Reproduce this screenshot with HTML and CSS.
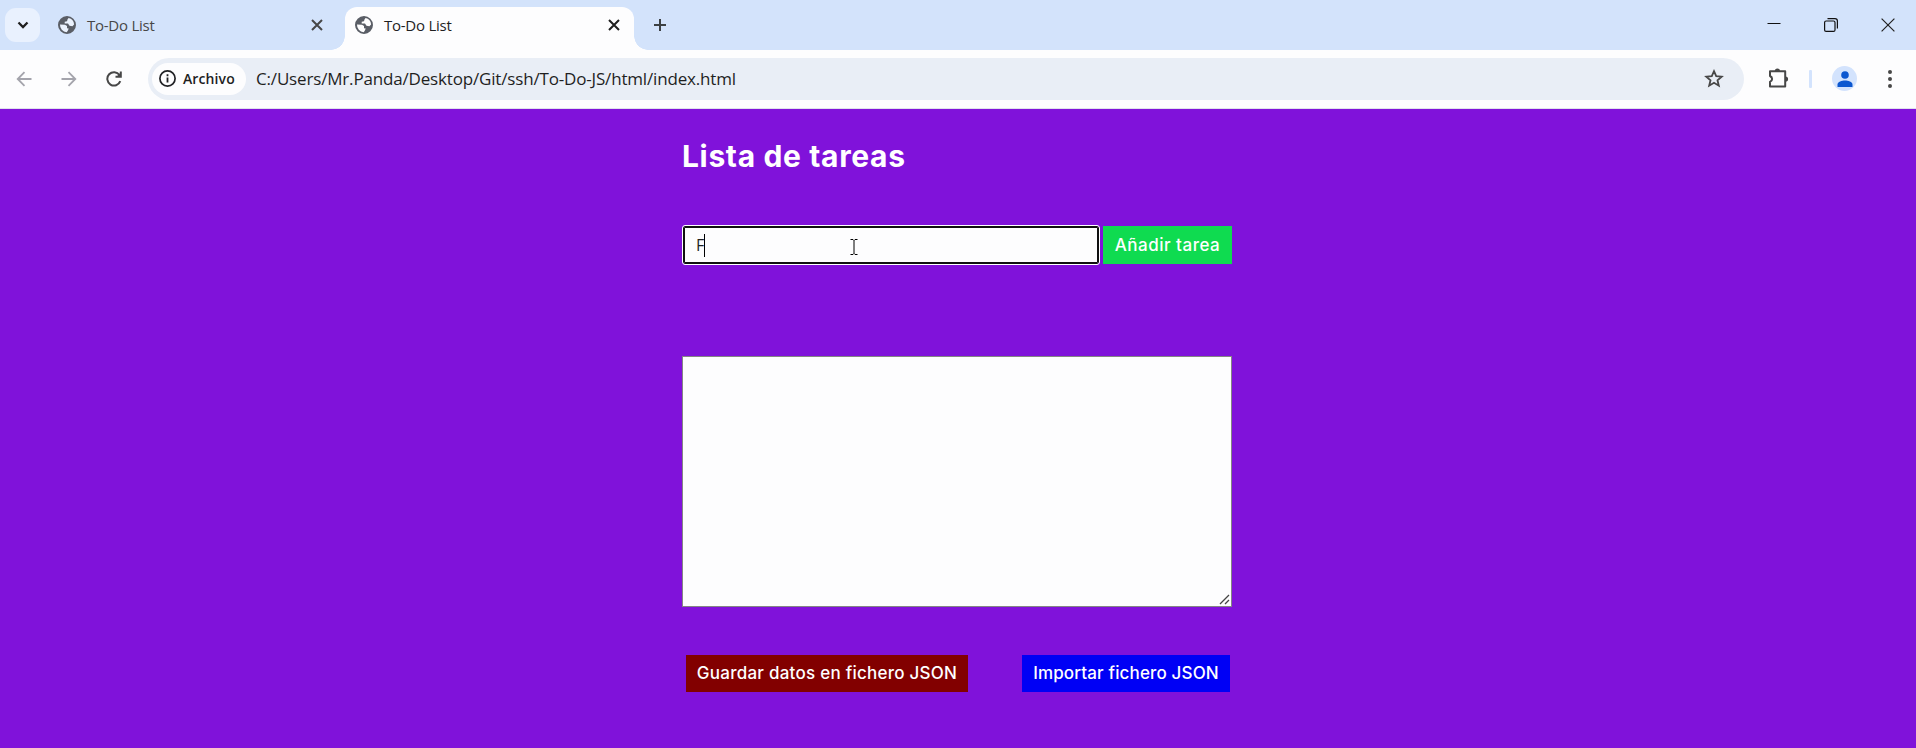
FILE: index.html
```html
<!DOCTYPE html>
<html lang="es">
<head>
<meta charset="utf-8">
<title>To-Do List</title>
<link rel="stylesheet" href="styles.css">
</head>
<body>
<svg class="defs" width="0" height="0" aria-hidden="true">
  <symbol id="globe" viewBox="0 0 18 18">
    <circle cx="9" cy="9" r="8.2" fill="#fff" fill-opacity=".55"/>
    <path fill="#5a5e66" fill-rule="evenodd" d="M9 0a9 9 0 1 0 0 18A9 9 0 0 0 9 0ZM2 8.6l5 .2 2 1.1v2.4l1.7.3-.8 2-1.2 1.6A7.2 7.2 0 0 1 2 8.6ZM10.600 1.900A7.200 7.200 0 0 1 16.100 8.400l-1.700 1.900-2.900-.5-1.500-2.200H6.700V5.700l2.300-.4.600-2Z"/>
  </symbol>
  <symbol id="cross" viewBox="0 0 12 12"><path d="M1 1l10 10M11 1L1 11" fill="none" stroke="currentColor" stroke-width="2"/></symbol>
</svg>

<header class="tabstrip">
  <button class="tab-search" aria-label="Buscar pestañas"><svg width="12" height="8" viewBox="0 0 12 8"><path d="M1.500 1.500L6 6l4.500-4.500" fill="none" stroke="currentColor" stroke-width="2.300"/></svg></button>
  <div class="tab">
    <svg class="globe"><use href="#globe"/></svg><span class="tab-title">To-Do List</span><svg class="cross"><use href="#cross"/></svg>
  </div>
  <div class="tab tab-active">
    <svg class="globe"><use href="#globe"/></svg><span class="tab-title">To-Do List</span><svg class="cross"><use href="#cross"/></svg>
  </div>
  <svg class="plus" width="14" height="14" viewBox="0 0 14 14"><path d="M7 1v12M1 7h12" stroke="#3c4043" stroke-width="2"/></svg>
  <div class="window-controls">
    <svg width="14" height="14" viewBox="0 0 14 14"><path d="M.5 5.500h13" stroke="#111" stroke-width="1"/></svg>
    <svg width="14" height="14" viewBox="0 0 14 14"><rect x=".6" y="3" width="10.400" height="10.400" rx="1.500" fill="none" stroke="#111" stroke-width="1.200"/><path d="M3.500 .6H11A2.400 2.400 0 0 1 13.400 3v7.500" fill="none" stroke="#111" stroke-width="1.200"/></svg>
    <svg width="14" height="14" viewBox="0 0 14 14"><path d="M.6 .6l12.800 12.800M13.400 .6L.6 13.400" stroke="#222" stroke-width="1.200"/></svg>
  </div>
</header>

<nav class="toolbar">
  <svg class="nav-icon muted" viewBox="0 0 16 16"><path d="M15.500 8H2M8.500 1.200L1.700 8l6.800 6.800"/></svg>
  <svg class="nav-icon muted" viewBox="0 0 16 16"><path d="M.5 8H14M7.500 1.200L14.300 8l-6.800 6.800"/></svg>
  <svg class="nav-icon" viewBox="0 0 16 16"><path d="M14.300 10.200A6.700 6.700 0 1 1 13.500 4M14.800 .5v5.300H9.500"/><path d="M14.800 1.500v4.300h-4.300z" fill="currentColor" stroke="none"/></svg>
  <div class="omnibox">
    <span class="chip">
      <svg width="17" height="17" viewBox="0 0 17 17"><circle cx="8.500" cy="8.500" r="7.600" fill="none" stroke="#202124" stroke-width="1.700"/><path d="M8.500 7.600v5M8.500 4.200v2" stroke="#202124" stroke-width="1.800"/></svg>
      <b class="chip-label">Archivo</b>
    </span>
    <span class="url">C:/Users/Mr.Panda/Desktop/Git/ssh/To-Do-JS/html/index.html</span>
    <svg class="star" width="20" height="19" viewBox="0 0 20 19"><path d="M10 2.200l2.200 5 5.500.5-4.200 3.600 1.300 5.400L10 13.800l-4.800 2.900 1.300-5.400-4.200-3.600 5.500-.5z" fill="none" stroke="#474747" stroke-width="1.800"/></svg>
  </div>
  <div class="actions">
    <svg width="21" height="21" viewBox="0 0 21 21"><path d="M2 3.200h15.200v15.300H2v-4.700c2.800-1.400 2.800-4.400 0-5.800z" fill="none" stroke="#474747" stroke-width="2" stroke-linejoin="round"/><path d="M6.800 3a2.600 2.600 0 0 1 5.200 0zM17.500 8.400a2.600 2.600 0 0 1 0 5.200z" fill="#474747"/></svg>
    <span class="divider"></span>
    <span class="avatar"><svg width="16" height="16" viewBox="0 0 16 16"><circle cx="8" cy="4" r="3.800" fill="#0b57d0"/><path d="M.5 16v-2.500C.5 10.800 5 9.500 8 9.500s7.500 1.300 7.500 4V16z" fill="#0b57d0"/></svg></span>
    <svg width="4" height="18" viewBox="0 0 4 18" fill="#474747"><circle cx="2" cy="2" r="2"/><circle cx="2" cy="9" r="2"/><circle cx="2" cy="16" r="2"/></svg>
  </div>
</nav>

<main class="page">
  <section class="todo">
    <h1 class="title">Lista de tareas</h1>
    <div class="entry">
      <div class="field"><span class="typed">F</span><span class="caret"></span>
        <svg class="pointer" width="8" height="16" viewBox="0 0 8 16"><path d="M.5 .5h2.500l1 1 1-1h2.500M4 1.500v13M.5 15.500h2.500l1-1 1 1h2.500" fill="none" stroke="#000"/></svg>
      </div>
      <button class="btn btn-add">Añadir tarea</button>
    </div>
    <div class="tasks">
      <svg class="grip" width="11" height="11" viewBox="0 0 11 11"><path d="M1 10L10 1M6 10l4-4" stroke="#444" stroke-width="1.300"/></svg>
    </div>
    <div class="files">
      <button class="btn btn-save">Guardar datos en fichero JSON</button>
      <button class="btn btn-import">Importar fichero JSON</button>
    </div>
  </section>
</main>
</body>
</html>
```
FILE: styles.css
```css
* { box-sizing: border-box; }
html, body { height: 100%; }
body {
  margin: 0;
  display: flex;
  flex-direction: column;
  overflow: hidden;
  font-family: "Open Sans", "Noto Sans", sans-serif;
  color: #1f1f1f;
}
svg { flex: none; display: block; }
.defs { position: absolute; }
button { border: 0; padding: 0; font: inherit; }

/* Tab strip */
.tabstrip {
  flex: none;
  height: 50px;
  display: flex;
  align-items: flex-end;
  background: #d3e3fb;
  padding-left: 5px;
}
.tab-search {
  width: 35px;
  height: 34px;
  margin-bottom: 8px;
  border-radius: 11px;
  background: #e9f1fe;
  color: #1f1f1f;
  display: grid;
  place-items: center;
}
.tab {
  height: 43px;
  width: 289px;
  margin-left: 8px;
  padding: 0 14px 7px 10px;
  display: flex;
  align-items: center;
  color: #474747;
}
.tab:not(.tab-active) { width: 297px; padding-right: 22px; }
.tab-active {
  position: relative;
  margin-left: 0;
  background: #fdfdfe;
  border-radius: 12px 12px 0 0;
  color: #1f1f1f;
}
.tab-active::before, .tab-active::after {
  content: "";
  position: absolute;
  bottom: 0;
  width: 14px;
  height: 14px;
}
.tab-active::before { right: 100%; background: radial-gradient(circle at 0 0, transparent 13.500px, #fdfdfe 14px); }
.tab-active::after { left: 100%; background: radial-gradient(circle at 100% 0, transparent 13.500px, #fdfdfe 14px); }
.globe { width: 18px; height: 18px; }
.cross { width: 12px; height: 12px; margin-left: auto; }
.tab-title { margin-left: 11px; font-size: 15px; letter-spacing: -.25px; }
.plus { margin: 0 0 18px 19px; }
.window-controls { margin: 0 21px 18px auto; display: flex; gap: 43px; }

/* Toolbar */
.toolbar {
  flex: none;
  height: 59px;
  padding: 0 24px 1px 16px;
  display: flex;
  align-items: center;
  background: #fdfdfe;
  border-bottom: 1px solid #dfe1ec;
}
.nav-icon {
  width: 16px;
  height: 16px;
  margin-right: 29px;
  fill: none;
  stroke: currentColor;
  stroke-width: 2;
  color: #474747;
}
.muted { color: #a4a4ac; stroke-width: 1.800; }
.omnibox {
  flex: 1;
  height: 42px;
  margin-left: -3px;
  padding: 0 20px 0 4px;
  display: flex;
  align-items: center;
  border-radius: 21px;
  background: #e9eef6;
}
.chip {
  width: 94px;
  height: 32px;
  padding-left: 7px;
  display: flex;
  align-items: center;
  gap: 7px;
  border-radius: 16px;
  background: #fdfdfe;
}
.chip-label { font-size: 14px; font-weight: 600; letter-spacing: .1px; white-space: nowrap; }
.url { margin-left: 10px; font-size: 17px; letter-spacing: -.17px; white-space: nowrap; }
.star { margin-left: auto; }
.actions { margin-left: 24px; display: flex; align-items: center; }
.divider { width: 3px; height: 18px; margin: 0 20px 0 20px; border-radius: 1px; background: #d3e3fd; }
.avatar {
  width: 25px;
  height: 25px;
  margin-right: 31px;
  border-radius: 50%;
  background: #d3e3fd;
  display: grid;
  place-items: center;
}

/* To-do page */
.page { flex: 1; background: #8012da; }
.todo {
  width: 550px;
  margin-left: 682px;
  padding-top: 25px;
  font-family: Inter, "Open Sans", sans-serif;
}
.title {
  height: 45px;
  margin: 0;
  color: #fff;
  font-size: 30px;
  font-weight: 700;
  letter-spacing: .65px;
  line-height: 45px;
  white-space: nowrap;
}
.entry { display: flex; margin-top: 47px; gap: 4px; }
.field {
  position: relative;
  width: 416px;
  height: 38px;
  margin-left: 1px;
  padding-left: 12px;
  display: flex;
  align-items: center;
  background: #fdfdfe;
  border: 1px solid #101010;
  border-radius: 2px;
  outline: 1px solid #fff;
  box-shadow: inset 0 0 0 1px #101010;
}
.typed { font-family: "Open Sans", sans-serif; font-size: 16px; }
.caret { width: 1px; height: 23px; background: #000; }
.pointer { position: absolute; left: 166px; top: 12px; }
.btn {
  color: #fff;
  font-size: 17px;
  font-weight: 450;
  white-space: nowrap;
}
.btn-add { width: 129px; height: 38px; background: #0fdb50; letter-spacing: .5px; }
.tasks {
  height: 251px;
  margin-top: 92px;
  display: flex;
  align-items: flex-end;
  justify-content: flex-end;
  padding: 1px;
  background: #fdfdfe;
  border: 1px solid #858585;
}
.files { display: flex; justify-content: space-between; margin-top: 48px; padding: 0 2px 0 4px; }
.btn-save { width: 282px; height: 37px; padding-bottom: 2px; background: #820000; letter-spacing: .25px; }
.btn-import { width: 208px; height: 37px; padding-bottom: 2px; background: #0000f5; letter-spacing: .15px; }
```
